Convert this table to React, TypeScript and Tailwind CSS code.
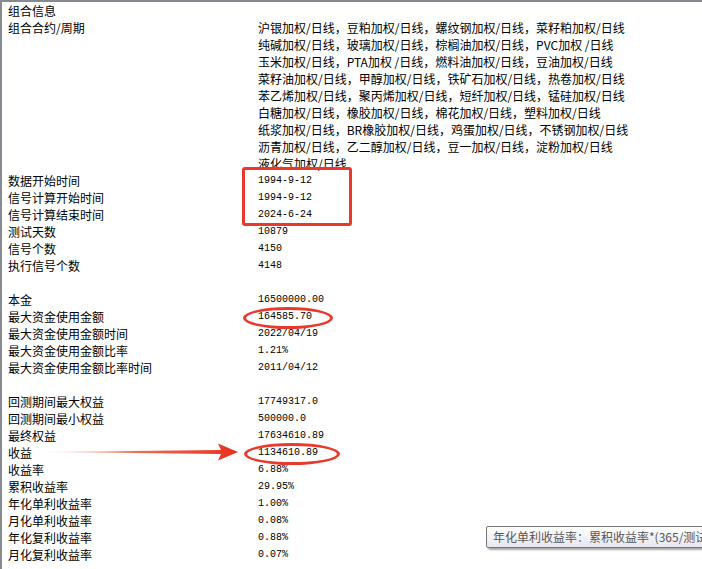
import React from 'react';

interface StatRow {
  label: string;
  value?: string;
}

const contracts = [
  '沪银加权/日线，豆粕加权/日线，螺纹钢加权/日线，菜籽粕加权/日线',
  '纯碱加权/日线，玻璃加权/日线，棕榈油加权/日线，PVC加权 /日线',
  '玉米加权/日线，PTA加权 /日线，燃料油加权/日线，豆油加权/日线',
  '菜籽油加权/日线，甲醇加权/日线，铁矿石加权/日线，热卷加权/日线',
  '苯乙烯加权/日线，聚丙烯加权/日线，短纤加权/日线，锰硅加权/日线',
  '白糖加权/日线，橡胶加权/日线，棉花加权/日线，塑料加权/日线',
  '纸浆加权/日线，BR橡胶加权/日线，鸡蛋加权/日线，不锈钢加权/日线',
  '沥青加权/日线，乙二醇加权/日线，豆一加权/日线，淀粉加权/日线',
  '液化气加权/日线',
];

// null = blank spacer row
const rows: (StatRow | null)[] = [
  { label: '数据开始时间', value: '1994-9-12' },
  { label: '信号计算开始时间', value: '1994-9-12' },
  { label: '信号计算结束时间', value: '2024-6-24' },
  { label: '测试天数', value: '10879' },
  { label: '信号个数', value: '4150' },
  { label: '执行信号个数', value: '4148' },
  null,
  { label: '本金', value: '16500000.00' },
  { label: '最大资金使用金额', value: '164585.70' },
  { label: '最大资金使用金额时间', value: '2022/04/19' },
  { label: '最大资金使用金额比率', value: '1.21%' },
  { label: '最大资金使用金额比率时间', value: '2011/04/12' },
  null,
  { label: '回测期间最大权益', value: '17749317.0' },
  { label: '回测期间最小权益', value: '500000.0' },
  { label: '最终权益', value: '17634610.89' },
  { label: '收益', value: '1134610.89' },
  { label: '收益率', value: '6.88%' },
  { label: '累积收益率', value: '29.95%' },
  { label: '年化单利收益率', value: '1.00%' },
  { label: '月化单利收益率', value: '0.08%' },
  { label: '年化复利收益率', value: '0.88%' },
  { label: '月化复利收益率', value: '0.07%' },
];

const cjk = "font-['Noto_Sans_CJK_SC',sans-serif] text-[12px] text-black";
const mono = "font-['Liberation_Mono','Noto_Sans_CJK_SC',monospace] text-[10px] text-black";

const App: React.FC = () => {
  return (
    <div className="relative w-[702px] h-[569px] overflow-hidden bg-white border-t-2 border-l-2 border-[#868b92]">
      <div className="grid grid-cols-[256px_1fr] auto-rows-[17px] leading-[17px]">
        <div className={`pl-[6px] ${cjk}`}>组合信息</div>
        <div />
        <div className={`row-span-9 pl-[6px] ${cjk}`}>组合合约/周期</div>
        <div className="row-span-9 flex flex-col">
          {contracts.map((line) => (
            <div key={line} className={`h-[17px] whitespace-pre ${cjk}`}>
              {line}
            </div>
          ))}
        </div>
        {rows.map((row, i) =>
          row ? (
            <React.Fragment key={row.label}>
              <div className={`pl-[6px] ${cjk}`}>{row.label}</div>
              <div className={mono}>{row.value}</div>
            </React.Fragment>
          ) : (
            <React.Fragment key={`gap-${i}`}>
              <div />
              <div />
            </React.Fragment>
          )
        )}
      </div>

      {/* annotations */}
      <div className="absolute left-[240px] top-[165px] w-[110px] h-[59px] border-[3px] border-[#e8392c] rounded-[3px]" />
      <div className="absolute left-[241px] top-[305px] w-[90px] h-[22px] border-[3px] border-[#e8392c] rounded-[50%]" />
      <div className="absolute left-[242px] top-[441px] w-[96px] h-[22px] border-[3px] border-[#e8392c] rounded-[50%]" />
      <svg className="absolute left-0 top-0" width="702" height="569">
        <defs>
          <linearGradient id="arr" x1="0" y1="0" x2="1" y2="0">
            <stop offset="0" stopColor="#f8c7bd" stopOpacity="0.4" />
            <stop offset="0.5" stopColor="#f06a55" />
            <stop offset="1" stopColor="#e8301c" />
          </linearGradient>
        </defs>
        <polygon
          points="38,450 219,448 216,441.5 236,450 216,458.5 219,452"
          fill="url(#arr)"
        />
      </svg>

      {/* tooltip */}
      <div className="absolute left-[484px] top-[524px] h-[22px] pl-[6px] pr-2 whitespace-nowrap border border-[#767676] rounded-[2px] bg-gradient-to-b from-white to-[#e6e7ef] shadow-[2px_2px_2px_rgba(0,0,0,0.35)] font-['Noto_Sans_CJK_SC',sans-serif] text-[12px] leading-[20px] text-[#575757]">
        年化单利收益率：累积收益率*(365/测试天数)
      </div>
    </div>
  );
};

export default App;
